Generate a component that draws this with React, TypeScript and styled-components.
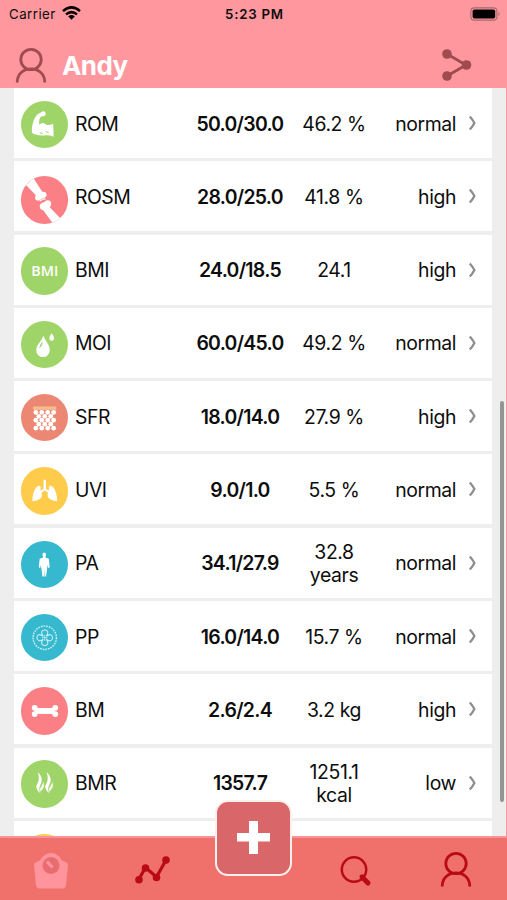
import React from "react";
import styled, { createGlobalStyle } from "styled-components";

const GlobalStyle = createGlobalStyle`
  * { box-sizing: border-box; }
  body { margin: 0; font-family: Inter, "Liberation Sans", sans-serif; color: #0d0d0d; }
`;

const Screen = styled.div`
  width: 507px;
  height: 900px;
  display: flex;
  flex-direction: column;
  overflow: hidden;
  background: #ff979e;
`;

const Header = styled.header`
  flex: none;
  height: 88px;
  background: #ff979e;
`;

const StatusBar = styled.div`
  height: 28px;
  padding: 0 6px 0 9px;
  display: grid;
  grid-template-columns: 1fr auto 1fr;
  align-items: center;
  font-size: 13.3px;
`;

const Carrier = styled.div`
  display: flex;
  align-items: center;
  gap: 6px;
  letter-spacing: 0.45px;
  svg { margin-top: -3px; }
`;

const Clock = styled.div`
  font-weight: 600;
  letter-spacing: 0.75px;
  transform: translateX(-0.5px);
`;

const BatterySlot = styled.div`
  display: flex;
  justify-content: flex-end;
  margin-top: -1px;
`;

const TitleBar = styled.div`
  height: 60px;
  padding: 0 34px 0 14px;
  display: flex;
  align-items: center;
`;

const Title = styled.h1`
  flex: 1;
  margin: 15px 0 0 14px;
  font-size: 26px;
  line-height: 32px;
  font-weight: 700;
  letter-spacing: -0.6px;
  color: #fff;
`;

const HeaderIcon = styled.span<{ $top: number }>`
  display: flex;
  margin-top: ${(p) => p.$top}px;
`;

const Content = styled.main`
  position: relative;
  flex: none;
  height: 748px;
  width: 506px;
  padding: 0 14px;
  background: #eeeeee;
  overflow: hidden;
`;

const List = styled.ul`
  margin: 0;
  padding: 0;
  list-style: none;
  display: flex;
  flex-direction: column;
  gap: 3.3px;
`;

const Row = styled.li`
  height: 70px;
  flex: none;
  display: grid;
  grid-template-columns: 54px 106px 132px 56px 94px 36px;
  align-items: center;
  background: #fff;
  font-size: 19.4px;
  line-height: 23px;
`;

const Badge = styled.span<{ $color: string; $drop?: number }>`
  width: 47.5px;
  height: 47.5px;
  margin: ${(p) => p.$drop ?? 3}px 0 0 6.5px;
  border-radius: 50%;
  background: ${(p) => p.$color};
  overflow: hidden;
  svg { display: block; width: 100%; height: 100%; }
`;

const Label = styled.span`
  padding: 2px 0 0 7px;
  letter-spacing: -0.5px;
`;

const Range = styled.span`
  padding-top: 2px;
  text-align: center;
  font-weight: 600;
  letter-spacing: -0.7px;
`;

const Value = styled.span`
  width: 80px;
  margin-left: -12px;
  padding-top: 2px;
  text-align: center;
  letter-spacing: -0.4px;
`;

const Status = styled.span`
  padding-top: 2px;
  text-align: right;
  letter-spacing: -0.4px;
`;

const Chevron = styled.span`
  display: flex;
  padding-left: 12px;
`;

const ScrollThumb = styled.div`
  position: absolute;
  right: 2px;
  top: 313px;
  width: 4px;
  height: 401px;
  border-radius: 2px;
  background: #939594;
`;

const TabBar = styled.nav`
  flex: none;
  position: relative;
  height: 64px;
  border-top: 2.5px solid #fa929a;
  background: #f0716c;
  display: grid;
  grid-template-columns: repeat(5, 1fr);
`;

const Tab = styled.div<{ $shift?: number; $top?: number }>`
  display: flex;
  justify-content: center;
  align-items: flex-start;
  padding-top: ${(p) => p.$top ?? 13}px;
  transform: translateX(${(p) => p.$shift ?? 0}px);
`;

const AddButton = styled.button`
  position: absolute;
  left: 214.5px;
  top: -38.5px;
  width: 77.5px;
  height: 76.5px;
  padding: 0;
  border: 2px solid #fff0ee;
  border-radius: 13px;
  background: #d96769;
  display: flex;
  justify-content: center;
  align-items: center;
`;

const UserIcon = ({ color, width = 2.8 }: { color: string; width?: number }) => (
  <svg width="34" height="37" viewBox="0 0 34 37" fill="none" stroke={color} strokeWidth={width}>
    <circle cx="17" cy="12.5" r="10.2" />
    <path d="M3.2 35.5C3.2 17.4 30.8 17.4 30.8 35.5" />
  </svg>
);

const ROM = (
  <svg viewBox="0 0 48 48" fill="#fff">
    <path d="M11 32C10.5 23 14 13 20 11.5Q24 9 25 12.5Q25.5 16 20.5 15.5Q17.5 19 18.5 24Q22 20.5 25.5 24Q28 25 32.5 23L33 36Q28 34 22 34.8Q15 35 11 32Z" />
    <path d="M19 32l3 1m3-2l3 1" stroke="#9fd468" strokeWidth="1" fill="none" />
  </svg>
);
const ROSM = (
  <svg viewBox="0 0 48 48" fill="#fff">
    <path d="M5 9L12.5 2L21.5 16Q26 15.5 26 20Q24 23 21 23Q17 26.5 14.5 23.5Q13.5 21.5 15 19.5Z" />
    <path d="M19 29.5Q20 27 24 26Q27 23 30 26Q31.5 28.5 29 31.5L40 43L33 49L22.5 34.5Q18.5 34 19 29.5Z" />
    <path d="M19 25.3q3-2 6-2.3" stroke="#fff" strokeWidth="1" />
  </svg>
);
const BmiText = styled.text`
  font: 600 14.5px "Open Sans", sans-serif;
`;
const BMI = (
  <svg viewBox="0 0 48 48" fill="#fff">
    <BmiText x="10.3" y="29.3" textLength="27.5">BMI</BmiText>
  </svg>
);
const MOI = (
  <svg viewBox="0 0 48 48" fill="#fff">
    <path d="M22.5 15C25 21 29.5 24.5 29 30A6.8 6.4 0 0 1 15.4 30C15 25 20.5 21 22.5 15Z" />
    <path d="M18.3 27.5Q19 24 21.8 20.5Q22 25 18.3 27.5Z" fill="#9fd468" />
    <path d="M31 12.5Q36 19 31 20.2Q26 19 31 12.5Z" />
  </svg>
);
const SFR = (
  <svg viewBox="0 0 48 48" fill="#fff">
    <rect x="12.3" y="12.6" width="23.4" height="3.4" fill="#f8bd8d" />
    {[0, 1, 2, 3, 4].map((r) =>
      Array.from({ length: r % 2 ? 3 : 4 }, (_, c) => (
        <circle key={`${r}-${c}`} cx={15 + c * 6 + (r % 2 ? 3 : 0)} cy={18.5 + r * 4} r="2.4" />
      )),
    )}
    <path d="M14 19l4 4-4 4 4 4-4 4m20-16l-4 4 4 4-4 4 4 4" stroke="#fff" fill="none" />
  </svg>
);
const UVI = (
  <svg viewBox="0 0 48 48" fill="#fff">
    <path d="M22.8 13h2.4v9l3 2v-4Q30 17.5 33 21Q36.5 26 36.5 34.5Q32 34.2 28.5 32Q26.2 30 27.2 26L24 23.8L20.8 26Q21.8 30 19.5 32Q16 34.2 11.5 34.5Q11.5 26 15 21Q18 17.5 19.8 20v4l3-2Z" />
  </svg>
);
const PA = (
  <svg viewBox="0 0 48 48" fill="#fff">
    <ellipse cx="23.5" cy="14" rx="1.8" ry="2.4" />
    <path d="M22.3 15.6h2.4l.4 1.4 3 1 .9 8-.8 1.3-.8-.2-.4-3-.5 3-1 7.5v1.3h-1.7l-.3-8-.3 8h-1.7v-1.3l-1-7.5-.5-3-.4 3-.8.2-.8-1.3.9-8 3-1Z" />
  </svg>
);
const PP = (
  <svg viewBox="0 0 48 48" fill="none" stroke="#c9f0f4" strokeWidth="1.1">
    <circle cx="24" cy="24" r="11.8" strokeWidth="1.5" strokeDasharray="1.7 1" />
    <path d="M22.5 22.5Q18.5 17 24 16Q29.5 17 25.5 22.5Q31 18.5 32 24Q31 29.5 25.5 25.5Q29.5 31 24 32Q18.5 31 22.5 25.5Q17 29.5 16 24Q17 18.5 22.5 22.5Z" />
    <path d="M24 21v6M21 24h6" strokeWidth=".8" />
  </svg>
);
const BM = (
  <svg viewBox="0 0 48 48" fill="#fff">
    <rect x="14" y="21.2" width="20" height="6" />
    <circle cx="13.8" cy="21" r="2.9" /><circle cx="13.8" cy="27.3" r="2.9" />
    <circle cx="34.6" cy="21" r="2.9" /><circle cx="34.6" cy="27.3" r="2.9" />
  </svg>
);
const BMR = (
  <svg viewBox="0 0 48 48" fill="#fff">
    <path d="M17 12Q23 18 20 24Q17 30 20 34Q13 29 17 23Q19 19 17 12Z" />
    <path d="M22.5 22Q24 27 22 29Q19 32 21 34Q18 29 20.5 27Q22 25 22.5 22Z" />
    <path d="M26 12Q32 18 29 24Q26 30 29 34Q22 29 26 23Q28 19 26 12Z" />
    <path d="M31.5 22Q33 27 31 29Q28 32 30 34Q27 29 29.5 27Q31 25 31.5 22Z" />
  </svg>
);

const GREEN = "#9fd468";
const CORAL = "#fa8085";
const YELLOW = "#fecb4b";
const TEAL = "#36b8cf";

const metrics = [
  { label: "ROM", range: "50.0/30.0", value: "46.2 %", status: "normal", color: GREEN, icon: ROM },
  { label: "ROSM", range: "28.0/25.0", value: "41.8 %", status: "high", color: CORAL, icon: ROSM, drop: 7 },
  { label: "BMI", range: "24.0/18.5", value: "24.1", status: "high", color: GREEN, icon: BMI },
  { label: "MOI", range: "60.0/45.0", value: "49.2 %", status: "normal", color: GREEN, icon: MOI },
  { label: "SFR", range: "18.0/14.0", value: "27.9 %", status: "high", color: "#eb8773", icon: SFR },
  { label: "UVI", range: "9.0/1.0", value: "5.5 %", status: "normal", color: YELLOW, icon: UVI },
  { label: "PA", range: "34.1/27.9", value: "32.8 years", status: "normal", color: TEAL, icon: PA },
  { label: "PP", range: "16.0/14.0", value: "15.7 %", status: "normal", color: TEAL, icon: PP },
  { label: "BM", range: "2.6/2.4", value: "3.2 kg", status: "high", color: CORAL, icon: BM },
  { label: "BMR", range: "1357.7", value: "1251.1 kcal", status: "low", color: GREEN, icon: BMR },
];

export default function App() {
  return (
    <>
      <GlobalStyle />
      <Screen>
        <Header>
          <StatusBar>
            <Carrier>
              Carrier
              <svg width="19" height="14" viewBox="0 0 19 14" fill="none" stroke="#000" strokeWidth="2.5">
                <path d="M1 5.1Q9.5-2.4 18 5.1" />
                <path d="M4 8.4Q9.5 3.8 15 8.4" />
                <path d="M6.2 10.4Q9.5 7.6 12.8 10.4L9.5 13.8Z" fill="#000" stroke="none" />
              </svg>
            </Carrier>
            <Clock>5:23 PM</Clock>
            <BatterySlot>
              <svg width="31" height="14" viewBox="0 0 31 14">
                <rect x=".9" y=".9" width="26" height="12.2" rx="3.4" fill="none" stroke="#a7686c" strokeWidth="1.1" />
                <rect x="2.6" y="2.5" width="22.6" height="9" rx="1.8" />
                <path d="M28.5 4.6Q30.7 7 28.5 9.4Z" fill="#a7686c" />
              </svg>
            </BatterySlot>
          </StatusBar>
          <TitleBar>
            <HeaderIcon $top={14}><UserIcon color="#9f4b50" /></HeaderIcon>
            <Title>Andy</Title>
            <HeaderIcon $top={13}>
              <svg width="34" height="34" viewBox="0 0 34 34" fill="#9f4b50">
                <path d="M8 6L27 17L8 28" fill="none" stroke="#9f4b50" strokeWidth="2.8" />
                <circle cx="8" cy="6" r="4.8" /><circle cx="27.5" cy="17" r="4.8" /><circle cx="8" cy="28" r="4.8" />
              </svg>
            </HeaderIcon>
          </TitleBar>
        </Header>
        <Content>
          <List>
            {metrics.map((m) => (
              <Row key={m.label}>
                <Badge $color={m.color} $drop={m.drop}>{m.icon}</Badge>
                <Label>{m.label}</Label>
                <Range>{m.range}</Range>
                <Value>{m.value}</Value>
                <Status>{m.status}</Status>
                <Chevron>
                  <svg width="10" height="16" viewBox="0 0 10 16" fill="none" stroke="#8e8e8e" strokeWidth="2.3">
                    <path d="M1.8 1.4Q5 5 6.4 8Q5 11 1.8 14.6" />
                  </svg>
                </Chevron>
              </Row>
            ))}
            <Row>
              <Badge $color={YELLOW} />
            </Row>
          </List>
          <ScrollThumb />
        </Content>
        <TabBar>
          <Tab>
            <svg width="36" height="40" viewBox="0 0 36 40" fill="#ff949c">
              <path d="M1 14Q1 11.5 3.5 11L7 9.5Q11 2 18 2Q25 2 29 9.5L32.5 11Q35 11.5 35 14L33 34Q32.5 37.5 29.5 37.5H6.5Q3.5 37.5 3 34Z" />
              <circle cx="18" cy="14.5" r="8.5" fill="#e96d70" />
              <path d="M14 10.5l5.5 6" stroke="#ff949c" strokeWidth="3.2" />
            </svg>
          </Tab>
          <Tab $shift={0.5} $top={12}>
            <svg width="36" height="36" viewBox="0 0 36 36" fill="#b90b14">
              <path d="M4.5 29L11 17.5L22 27L31.5 10" fill="none" stroke="#b90b14" strokeWidth="3.2" />
              <circle cx="4.5" cy="29.8" r="3.8" /><circle cx="11" cy="18" r="3.8" />
              <circle cx="22" cy="27.5" r="3.8" /><circle cx="31.5" cy="10" r="3.8" />
            </svg>
          </Tab>
          <Tab />
          <Tab $shift={0.5}>
            <svg width="34" height="38" viewBox="0 0 34 38" fill="none" stroke="#b90b14">
              <circle cx="15.5" cy="18.5" r="12.2" strokeWidth="2.5" />
              <path d="M23.5 26L29.5 32" strokeWidth="5" strokeLinecap="round" />
            </svg>
          </Tab>
          <Tab><UserIcon color="#b90b14" /></Tab>
          <AddButton aria-label="Add measurement">
            <svg width="33" height="33" viewBox="0 0 33 33">
              <path d="M12 0H21V12H33V20.5H21V33H12V20.5H0V12H12Z" fill="#fff" />
            </svg>
          </AddButton>
        </TabBar>
      </Screen>
    </>
  );
}
